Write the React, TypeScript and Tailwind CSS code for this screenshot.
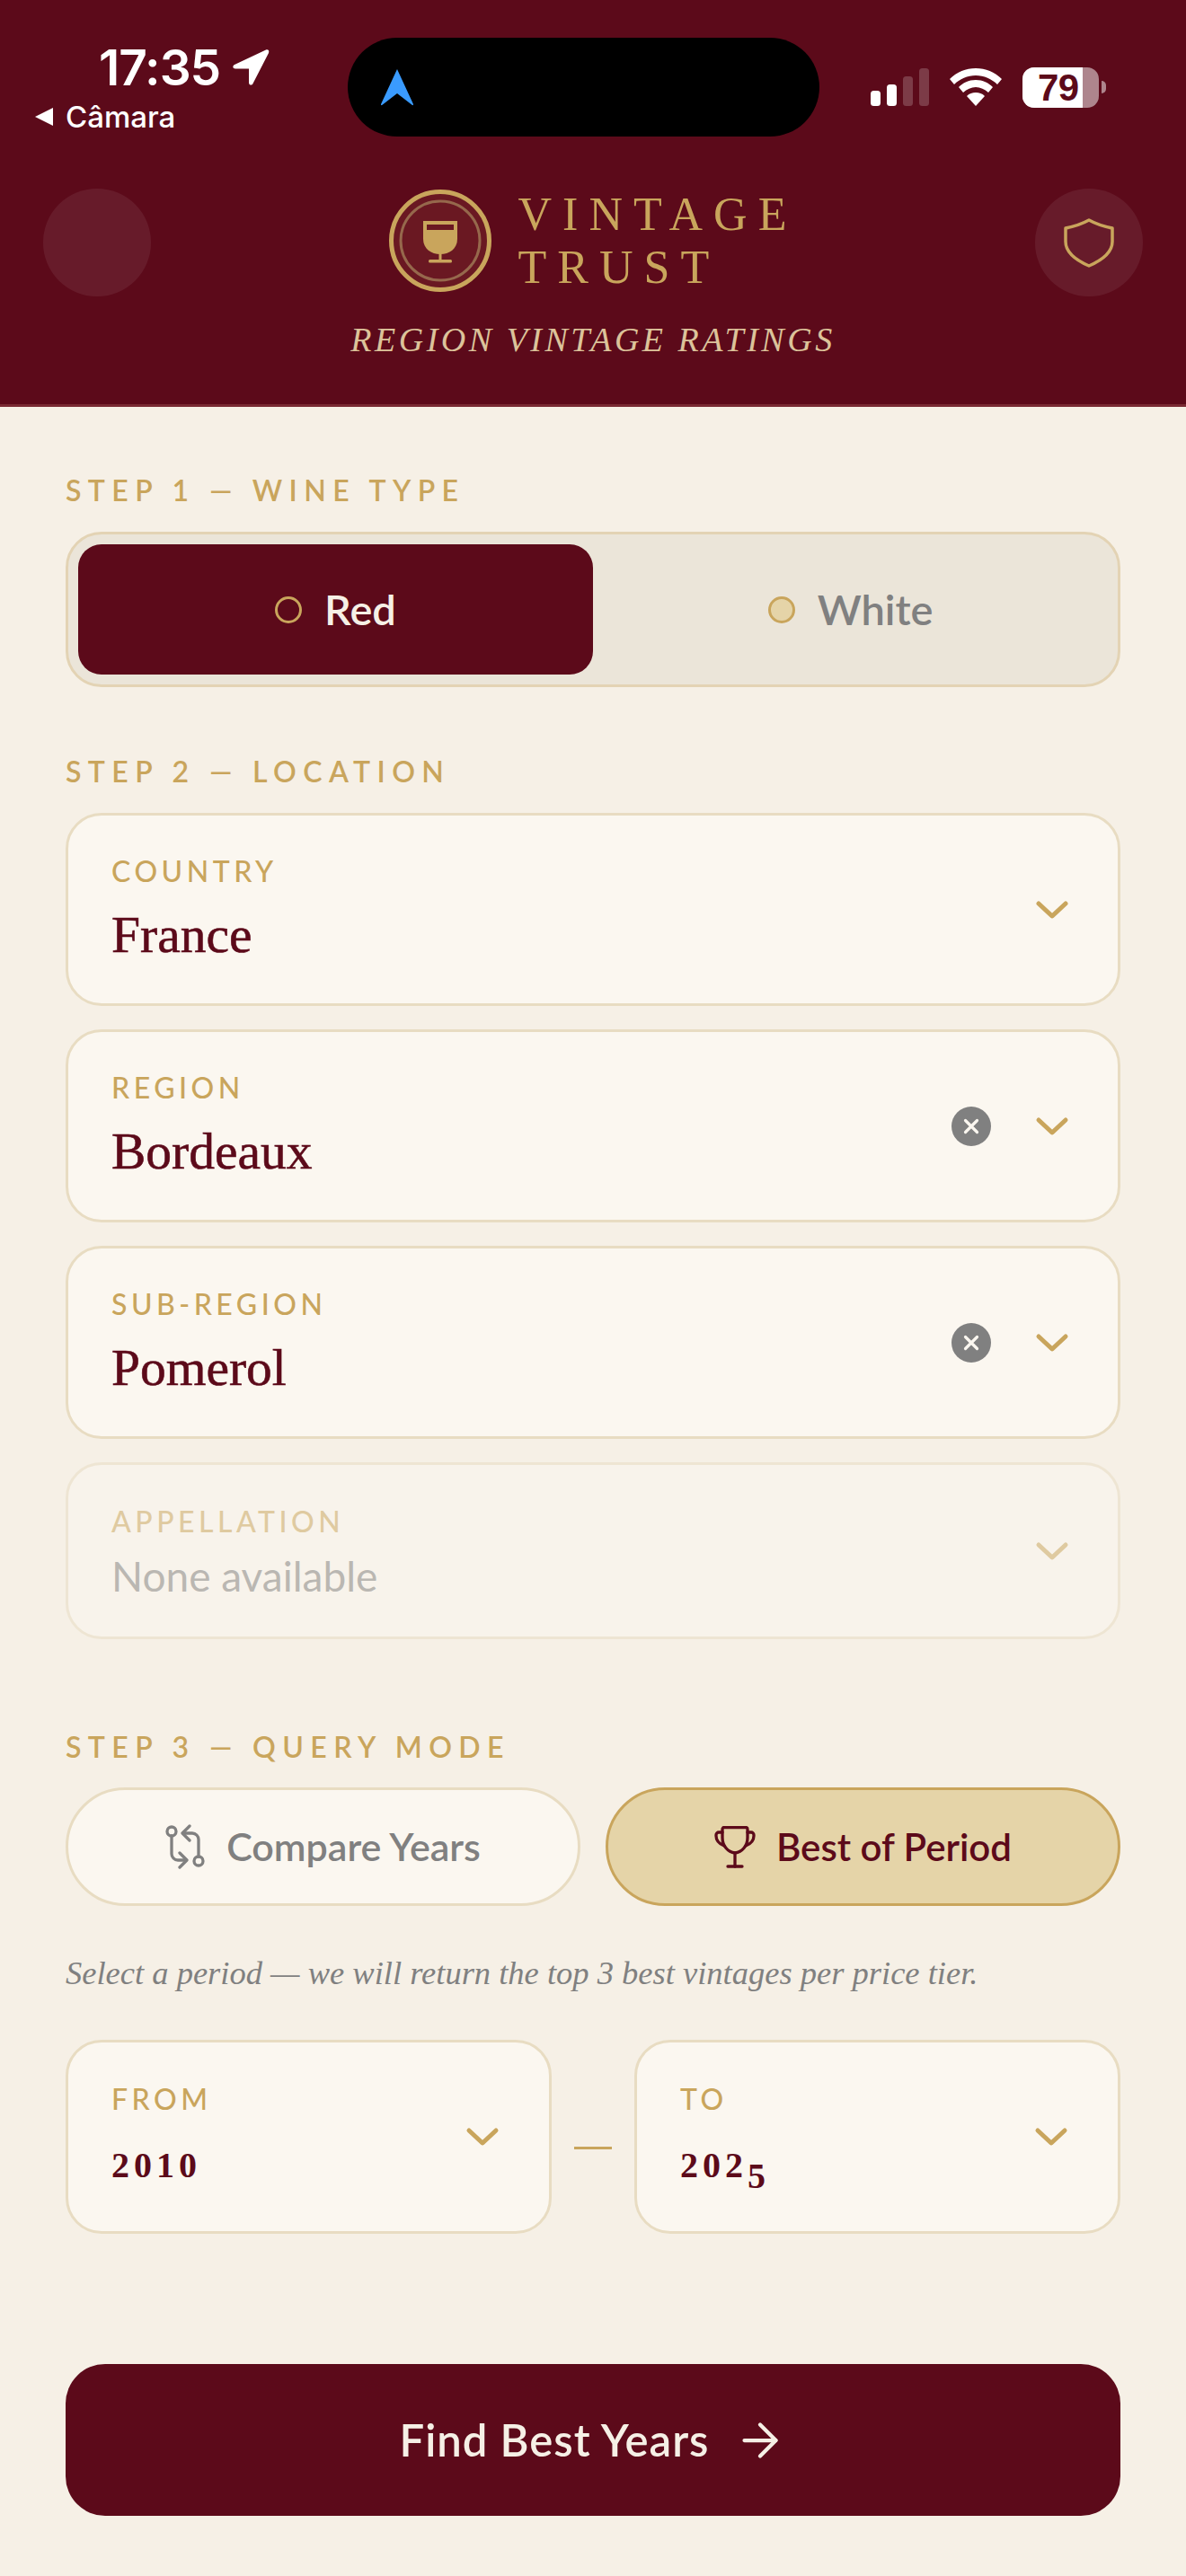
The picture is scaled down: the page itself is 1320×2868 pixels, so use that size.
const sans = "font-['Lato',sans-serif]";
const serif = "font-['Liberation_Serif',serif]";

function Chevron() {
  return (
    <svg width="40" height="24" viewBox="0 0 40 24" fill="none" className="shrink-0 text-[#c9a55c]">
      <path d="M5 5l15 14L35 5" stroke="currentColor" strokeWidth="5" strokeLinecap="round" strokeLinejoin="round" />
    </svg>
  );
}

function ClearButton() {
  return (
    <div className="mr-[48px] flex h-[44px] w-[44px] shrink-0 items-center justify-center rounded-full bg-[#808080]">
      <svg width="20" height="20" viewBox="0 0 20 20" fill="none">
        <path d="M3.500 3.500l13 13M16.500 3.500l-13 13" stroke="#fbf7f0" strokeWidth="3.200" strokeLinecap="round" />
      </svg>
    </div>
  );
}

function StepLabel({ children }: { children: string }) {
  return (
    <div className={`${sans} text-[32px] leading-[32px] font-semibold tracking-[7.4px] whitespace-nowrap text-[#c9a55c]`}>
      {children}
    </div>
  );
}

function SelectCard({ label, value, clearable }: { label: string; value: string; clearable?: boolean }) {
  return (
    <div className="flex h-[215px] items-center rounded-[40px] border-[3px] border-[#e8dcc2] bg-[#fbf7f0] pr-[53px] pl-[48px]">
      <div className="flex-1 pt-[4px]">
        <div className={`${sans} text-[32px] leading-[32px] font-medium tracking-[4.5px] text-[#c9a55c]`}>{label}</div>
        <div className={`${serif} mt-[21px] text-[57.5px] leading-[68px] [-webkit-text-stroke:0.6px_#5c0a1a] text-[#5c0a1a]`}>{value}</div>
      </div>
      {clearable && <ClearButton />}
      <Chevron />
    </div>
  );
}

function YearCard({ label, children }: { label: string; children: React.ReactNode }) {
  return (
    <div className="flex h-[216px] flex-1 items-center rounded-[40px] border-[3px] border-[#e8dcc2] bg-[#fbf7f0] pr-[54px] pl-[48px]">
      <div className="flex-1 pt-[2px]">
        <div className={`${sans} text-[32px] leading-[32px] font-medium tracking-[4.5px] text-[#c9a55c]`}>{label}</div>
        <div className={`${serif} mt-[26px] h-[60px] pt-[7px] text-[40px] leading-[50px] font-bold tracking-[5px] text-[#5c0a1a]`}>{children}</div>
      </div>
      <Chevron />
    </div>
  );
}

function StatusBar() {
  return (
    <div className="flex h-[150px] justify-between pt-[46px] pr-[89px] pl-[38px] text-white">
      <div className="w-[270px]">
        <div className="flex items-center pl-[72px]">
          <span className="font-['Inter',sans-serif] text-[55px] leading-[58px] font-semibold tracking-[-1px]">17:35</span>
          <svg width="42" height="42" viewBox="0 0 42 42" className="ml-[13px]">
            <path d="M38 1.500L3 18c-2.500 1.200-2 4.500 1 4.500h15v15.500c0 3 3.500 3.500 4.500 1L41 5c1-2.500-.7-4.500-3-3.500z" fill="white" />
          </svg>
        </div>
        <div className="mt-[8px] flex items-center">
          <svg width="22" height="22" viewBox="0 0 22 22">
            <path d="M21 1v20L1 11z" fill="white" strokeLinejoin="round" />
          </svg>
          <span className="ml-[13px] font-['Inter',sans-serif] text-[33px] leading-[36px] font-medium">Câmara</span>
        </div>
      </div>
      <div className="mt-[28px] flex h-[46px] items-center">
        <svg width="66" height="42" viewBox="0 0 66 42">
          <rect x="0" y="25" width="11" height="17" rx="3.500" fill="white" />
          <rect x="18" y="18" width="11" height="24" rx="3.500" fill="white" />
          <rect x="36" y="9" width="11" height="33" rx="3.500" fill="white" fillOpacity="0.2" />
          <rect x="54" y="0" width="11" height="42" rx="3.500" fill="white" fillOpacity="0.2" />
        </svg>
        <svg width="58" height="42" viewBox="0 0 58 42" className="ml-[22px]">
          <path d="M29 0C18 0 8 4 0 12l5 6C11 12 20 8 29 8s18 4 24 10l5-6C50 4 40 0 29 0z" fill="white" />
          <path d="M29 13c-8 0-14 3-19 8l5 6c4-3.500 9-6 14-6s10 2.500 14 6l5-6c-5-5-11-8-19-8z" fill="white" />
          <path d="M29 27c-4 0-7 1-10 4l10 11 10-11c-3-3-6-4-10-4z" fill="white" />
        </svg>
        <div className="relative ml-[23px] h-[45px] w-[85px] overflow-hidden rounded-[13px] bg-white/50">
          <div className="h-full w-[67px] bg-white" />
          <span className="absolute top-0 left-[17px] font-['Liberation_Sans',sans-serif] text-[42px] leading-[46px] font-bold tracking-[-0.5px] text-[#5c0a1a]">79</span>
        </div>
        <div className="ml-[3px] h-[14px] w-[5px] rounded-r-full bg-white/50" />
      </div>
    </div>
  );
}

function Logo() {
  return (
    <svg width="114" height="114" viewBox="0 0 114 114" className="shrink-0">
      <circle cx="57" cy="57" r="54.500" fill="#6a1822" stroke="#c9a55c" strokeWidth="5" />
      <circle cx="57" cy="57" r="44" fill="none" stroke="#96684c" strokeWidth="3" />
      <path d="M38 35h38v20c0 11-9 17-19 17s-19-6-19-17z" fill="#c9a55c" />
      <rect x="42" y="39" width="30" height="6" fill="#6a1822" />
      <rect x="55.500" y="71" width="3" height="9" fill="#c9a55c" />
      <rect x="44" y="78" width="26" height="3.500" rx="1.500" fill="#c9a55c" />
    </svg>
  );
}

function Shield() {
  return (
    <svg width="56" height="55" viewBox="0 0 56 55" fill="none">
      <path d="M28 2c8 4.500 16 7 26 9v15c0 11-10 20-26 27C12 46 2 37 2 26V11c10-2 18-4.500 26-9z" stroke="#c9a55c" strokeWidth="3.500" strokeLinejoin="round" />
    </svg>
  );
}

function CompareIcon() {
  return (
    <svg width="44" height="50" viewBox="0 0 44 50" fill="none" stroke="currentColor" strokeWidth="3.300" strokeLinecap="round" strokeLinejoin="round" className="shrink-0">
      <circle cx="7" cy="8" r="5" />
      <path d="M7 13v20a7 7 0 0 0 7 7h9" />
      <path d="M16 32l8 8-8 8" />
      <circle cx="37" cy="41" r="5" />
      <path d="M37 36V17a7 7 0 0 0-7-7h-10" />
      <path d="M27 2l-8 8 8 8" />
    </svg>
  );
}

function TrophyIcon() {
  return (
    <svg width="46" height="47" viewBox="0 0 46 47" fill="none" stroke="currentColor" strokeWidth="3.300" strokeLinecap="round" strokeLinejoin="round" className="shrink-0">
      <path d="M9 3.500a2 2 0 0 1 2-2h24a2 2 0 0 1 2 2V13c0 9-6 16-14 17C15 29 9 22 9 13z" />
      <path d="M9 7H5a3 3 0 0 0-3 3v1c0 5 4 9 9 11" />
      <path d="M37 7h4a3 3 0 0 1 3 3v1c0 5-4 9-9 11" />
      <path d="M23 30v15" />
      <path d="M15 45h16" />
    </svg>
  );
}

export default function App() {
  return (
    <div className="min-h-[2868px] bg-[#f6f0e6]">
      <header className="relative h-[453px] border-b-[3px] border-[#7a2a33] bg-[#5c0a1a]">
        <StatusBar />
        {/* Dynamic island */}
        <div className="absolute top-[42px] left-[387px] flex h-[110px] w-[525px] items-center rounded-full bg-black pl-[36px]">
          <svg width="38" height="42" viewBox="0 0 38 42">
            <path d="M19 1L37 40c.3 1-.8 1.500-1.500.8L19 28 2.500 40.800C1.800 41.500.7 41 1 40z" fill="#3a9bff" />
          </svg>
        </div>

        <div className="mt-[60px] flex items-start justify-between px-[48px]">
          <div className="h-[120px] w-[120px] rounded-full bg-white/[0.07]" />
          <div className="-mt-[1px] flex flex-col items-center">
            <div className="flex items-center gap-[30px]">
              <Logo />
              <div className={`${serif} text-[52px] leading-[59px] tracking-[12px] text-[#c9a55c]`}>
                <div>VINTAGE</div>
                <div>TRUST</div>
              </div>
            </div>
            <div className={`${serif} mt-[29px] text-[38px] leading-[44px] tracking-[3.5px] whitespace-nowrap text-[#dcc39a] italic`}>
              REGION VINTAGE RATINGS
            </div>
          </div>
          <div className="flex h-[120px] w-[120px] items-center justify-center rounded-full bg-white/[0.07]">
            <Shield />
          </div>
        </div>
      </header>

      <main className="px-[73px] pt-[77px]">
        <StepLabel>STEP 1 — WINE TYPE</StepLabel>
        <div className="mt-[30px] flex h-[173px] rounded-[40px] border-[3px] border-[#e3d3b4] bg-[#ebe5d9] p-[11px]">
          <div className={`${sans} flex flex-1 items-center justify-center gap-[25px] rounded-[26px] bg-[#5c0a1a] text-[47px] font-semibold text-[#f6f0e6]`}>
            <span className="h-[30px] w-[30px] rounded-full border-[3px] border-[#c9a55c]" />
            Red
          </div>
          <div className={`${sans} flex flex-1 items-center justify-center gap-[25px] text-[47px] font-semibold text-[#808080]`}>
            <span className="h-[30px] w-[30px] rounded-full border-[3px] border-[#c9a55c] bg-[#e5d4a8]" />
            White
          </div>
        </div>

        <div className="mt-[78px]">
          <StepLabel>STEP 2 — LOCATION</StepLabel>
        </div>
        <div className="mt-[30px] flex flex-col gap-[26px]">
          <SelectCard label="COUNTRY" value="France" />
          <SelectCard label="REGION" value="Bordeaux" clearable />
          <SelectCard label="SUB-REGION" value="Pomerol" clearable />
          <div className="flex h-[197px] items-center rounded-[40px] border-[3px] border-[#e8dcc2] bg-[#fbf7f0] pr-[53px] pl-[48px] opacity-50">
            <div className="flex-1 pt-[6px]">
              <div className={`${sans} text-[32px] leading-[32px] font-medium tracking-[4.5px] text-[#c9a55c]`}>APPELLATION</div>
              <div className={`${sans} mt-[18px] text-[46px] leading-[54px] text-[#808080]`}>None available</div>
            </div>
            <Chevron />
          </div>
        </div>

        <div className="mt-[104px]">
          <StepLabel>STEP 3 — QUERY MODE</StepLabel>
        </div>
        <div className="mt-[29px] flex gap-[28px]">
          <div className={`${sans} flex h-[132px] flex-1 items-center justify-center gap-[24px] rounded-full border-[3px] border-[#e8dcc2] bg-[#fbf7f0] text-[43px] font-semibold text-[#808080]`}>
            <CompareIcon />
            Compare Years
          </div>
          <div className={`${sans} flex h-[132px] flex-1 items-center justify-center gap-[23px] rounded-full border-[3px] border-[#c9a55c] bg-[#e5d4a8] text-[42px] font-semibold text-[#5c0a1a]`}>
            <TrophyIcon />
            Best of Period
          </div>
        </div>

        <div className={`${serif} mt-[50px] text-[36.5px] leading-[50px] whitespace-nowrap text-[#808080] italic`}>
          Select a period — we will return the top 3 best vintages per price tier.
        </div>

        <div className="mt-[49px] flex items-center">
          <YearCard label="FROM">2010</YearCard>
          <div className="mx-[25px] mt-[24px] h-[3px] w-[42px] shrink-0 bg-[#c9a55c]" />
          <YearCard label="TO">
            202<span className="align-[-12px]">5</span>
          </YearCard>
        </div>

        <button className={`${sans} mt-[145px] flex h-[169px] w-full items-center justify-center gap-[26px] rounded-[44px] bg-[#5c0a1a] text-[49px] font-semibold tracking-[1px] text-[#f6f0e6]`}>
          Find Best Years
          <svg width="60" height="60" viewBox="0 0 24 24" fill="none" stroke="currentColor" strokeWidth="1.700" strokeLinecap="round" strokeLinejoin="round" className="shrink-0">
            <path d="M5 12h14" />
            <path d="M12 5l7 7-7 7" />
          </svg>
        </button>
      </main>
    </div>
  );
}
